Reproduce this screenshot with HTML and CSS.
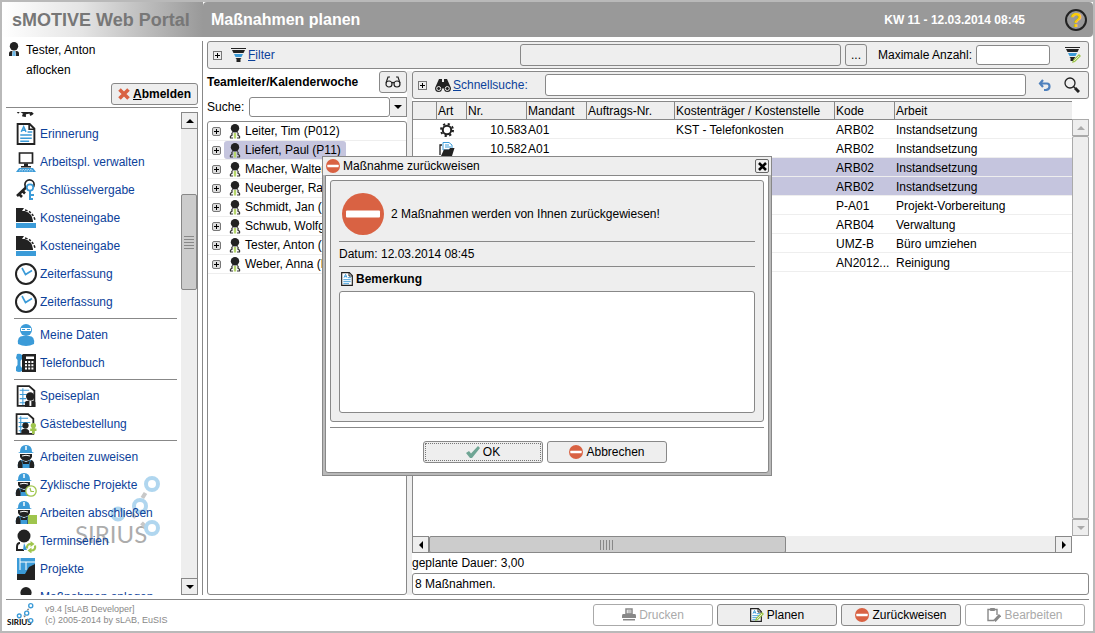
FILE: index.html
```html
<!DOCTYPE html>
<html lang="de">
<head>
<meta charset="utf-8">
<title>sMOTIVE Web Portal</title>
<link rel="stylesheet" href="styles.css">
</head>
<body>
<svg class="defs" aria-hidden="true">
  <symbol id="stop" viewBox="0 0 42 42"><circle cx="21" cy="21" r="21" fill="#d96243"/><rect x="4" y="17.500" width="34" height="7" rx="1" fill="#fff"/></symbol>
  <symbol id="user" viewBox="0 0 12 15"><circle cx="6" cy="4.200" r="4.200" fill="#222"/><path d="M1 14V11.500Q1 9 3.500 9L4.500 9 4 14ZM11 14V11.500Q11 9 8.500 9L7.500 9 8 14Z" fill="#222"/><path d="M5 9H7L7.800 14H4.200Z" fill="#6db9e8"/></symbol>
  <symbol id="leader" viewBox="0 0 12 15"><circle cx="6" cy="4.200" r="4.200" fill="#222"/><path d="M4.200 8.500Q2 9 3.200 11Q.8 12 1.500 14H4M7.800 8.500Q10 9 8.800 11Q11.200 12 10.500 14H8" fill="none" stroke="#333" stroke-width="1.200"/><path d="M4.800 9H7.200V14.500H4.800Z" fill="#b5d56a"/></symbol>
  <symbol id="doc" viewBox="0 0 18 21"><path d="M1 1H12.500L17 5.500V20H1Z" fill="#fff" stroke="#222" stroke-width="1.800"/><path d="M12 1V6H17" fill="none" stroke="#222" stroke-width="1.500"/><path d="M4.500 8.500L6.800 3.500 9 8.500M5.500 7H8.200" fill="none" stroke="#3b9bd8" stroke-width="1.400"/><path d="M10.500 8.500H15M3.500 11.500H14.500M3.500 14.500H14.500M3.500 17.500H12" stroke="#3b9bd8" stroke-width="1.400"/></symbol>
  <symbol id="pc" viewBox="0 0 20 20"><path d="M3.500 1H16.500V11H3.500Z" fill="#fff" stroke="#222" stroke-width="1.700"/><path d="M8 11.500H12V14H15V15.500H5V14H8Z" fill="#222"/><path d="M3 16H17L20 20H0Z" fill="#3b9bd8"/><path d="M4 17.500H16M3 18.800H17" stroke="#fff" stroke-width=".6" stroke-dasharray="1.500 1"/></symbol>
  <symbol id="keys" viewBox="0 0 20 22"><circle cx="13.500" cy="5.500" r="4.600" fill="none" stroke="#222" stroke-width="1.700"/><path d="M10 8.500L1 17M3 15L6 18M6.500 12L9 14.500" stroke="#222" stroke-width="2.600"/><circle cx="14" cy="8.500" r="3.200" fill="#fff" stroke="#3b9bd8" stroke-width="1.700"/><path d="M14 11.500V21M14 16H18M14 20H17" stroke="#3b9bd8" stroke-width="2"/></symbol>
  <symbol id="cost" viewBox="0 0 20 20"><path d="M0 0H8L6 3H9Q16 5 17 13V14H0Z" fill="#222"/><path d="M9 2Q17 4 19 12" fill="none" stroke="#222" stroke-width="1.500" stroke-dasharray="2.500 1.500"/><rect y="15" width="20" height="5" fill="#3b9bd8"/></symbol>
  <symbol id="clock" viewBox="0 0 22 22"><circle cx="11" cy="11" r="10" fill="#fff" stroke="#222" stroke-width="2"/><path d="M7 5L10.500 11.500 17 7.500" fill="none" stroke="#3b9bd8" stroke-width="1.600"/></symbol>
  <symbol id="me" viewBox="0 0 18 22"><circle cx="9" cy="6" r="6" fill="#3b9bd8"/><rect x="4" y="4" width="10" height="3" fill="#fff"/><path d="M5 5.500h3M10 5.500h3" stroke="#3b9bd8"/><path d="M1 20Q0 12 6 12H12Q18 12 17 20Q13 22 9 22T1 20Z" fill="#3b9bd8"/></symbol>
  <symbol id="phone" viewBox="0 0 20 18"><path d="M1 0Q4-1 6 1V5L4.500 7V12L6 14V17Q3 19 0 17V13L1.500 11V6L0 4Z" fill="#3b9bd8"/><path d="M7 0H20V18H6V1Z" fill="#222"/><path d="M10 2.500H18V5H10Z" fill="#fff"/><path d="M9 8H18M9 11.200H18M9 14.400H18" stroke="#fff" stroke-width="2" stroke-dasharray="2 1.200"/></symbol>
  <symbol id="meal" viewBox="0 0 18 21"><path d="M1 1H12L17 5.500V20H1Z" fill="#fff" stroke="#222" stroke-width="1.700"/><path d="M3 5H12M3 9H14M3 13H9M3 17H9M6 3V19" stroke="#3b9bd8"/><circle cx="13" cy="11" r="4" fill="#222"/><path d="M8 21V17Q8 15 11 15H15Q18 15 18 17V21Z" fill="#222"/><path d="M12.300 15h1.800v5h-1.800Z" fill="#fff"/></symbol>
  <symbol id="guest" viewBox="0 0 20 21"><path d="M1 1H12L17 5.500V20H1Z" fill="#fff" stroke="#222" stroke-width="1.700"/><path d="M3 5H12M3 9H14M3 13H9M3 17H9M5 3V19" stroke="#3b9bd8"/><circle cx="9.500" cy="12" r="3" fill="#222"/><path d="M5.500 19V17Q6 15 9 15T13 17V19Z" fill="#222"/><circle cx="17" cy="12" r="2.500" fill="#9fc54d"/><path d="M14 16H20M17 13V20" stroke="#9fc54d" stroke-width="2.500"/></symbol>
  <symbol id="worker" viewBox="0 0 18 24"><path d="M3 7Q3 0 9 0T15 7L17 8H1Z" fill="#3b9bd8"/><path d="M9 1V5" stroke="#fff" stroke-width="1.500"/><path d="M3 9H15V12Q13 16 9 16T3 12Z" fill="#222"/><path d="M5 11Q9 9.500 13 11" stroke="#fff" fill="none"/><path d="M1 23Q0 15 5 15L9 17 13 15Q18 15 17 23Z" fill="#3b9bd8"/><path d="M1 23Q0 15.500 4 15L5.500 19V23ZM17 23Q18 15.500 14 15L12.500 19V23Z" fill="#222"/><path d="M5 15.500L9 17 13 15.500 12 19H6Z" fill="#222"/></symbol>
  <symbol id="cyclic" viewBox="0 0 22 24"><use href="#worker" width="18" height="24"/><circle cx="16" cy="18" r="5.200" fill="#fff" stroke="#9fc54d" stroke-width="1.300"/><path d="M15 15L16 18.500H19" fill="none" stroke="#9fc54d" stroke-width="1.200"/></symbol>
  <symbol id="finish" viewBox="0 0 22 24"><use href="#worker" width="18" height="24"/><rect x="13" y="14" width="9" height="9" fill="#9fc54d"/></symbol>
  <symbol id="series" viewBox="0 0 22 24"><circle cx="9" cy="7" r="6.500" fill="#222"/><path d="M5 14Q2 14 2 18V21H9" fill="none" stroke="#222" stroke-width="2"/><path d="M9 14L12 21H8Z" fill="#3b9bd8"/><path d="M12 19.500Q11.500 15 16 15M20 16.500Q21 21.500 16 21.500" fill="none" stroke="#9fc54d" stroke-width="2.200"/><path d="M15.500 12L19.500 15 15.500 18ZM16.500 18.500L12.500 21.500 16.500 24.500Z" fill="#9fc54d"/></symbol>
  <symbol id="project" viewBox="0 0 18 22"><rect width="18" height="22" fill="#222"/><path d="M0 0H18V6L12 9 8 16H0Z" fill="#3b9bd8"/><path d="M3 0V12M3 4H18M9 4V12" stroke="#fff" fill="none"/></symbol>
  <symbol id="funnel" viewBox="0 0 15 14"><path d="M0 0H15V1H0ZM1 2H14L12.500 5H2.500Z" fill="#222"/><path d="M3 6H12L10.500 9H4.500Z" fill="#3b9bd8"/><path d="M4.500 10H10.500L9.500 11V14H5.500V11Z" fill="#222"/></symbol>
  <symbol id="gear" viewBox="0 0 14 14"><circle cx="7" cy="7" r="4.200" fill="none" stroke="#222" stroke-width="2"/><circle cx="7" cy="7" r="6" fill="none" stroke="#222" stroke-width="2" stroke-dasharray="2.200 2.512"/></symbol>
  <symbol id="folder" viewBox="0 0 16 14"><path d="M4 .5H10L13 3V8H4Z" fill="#fff" stroke="#3b9bd8"/><path d="M6 3H10M6 5H12" stroke="#3b9bd8"/><path d="M3 3H1V13" fill="none" stroke="#222" stroke-width="1.300"/><path d="M5 7.500H10L11 6H15.500L13 14H2Z" fill="#222"/></symbol>
  <symbol id="pencil" viewBox="0 0 9 9"><path d="M0 9L1 6 7 0 9 2 3 8Z" fill="#9fc54d"/><path d="M2 7L7 2" stroke="#fff" stroke-width=".7"/></symbol>
  <symbol id="stars" viewBox="0 0 52 62"><path d="M8 38H23L38 52M26 34L42 8" fill="none" stroke="#777" stroke-width="4" stroke-dasharray="6 8"/><g fill="#fff" stroke="#3b9bd8" stroke-width="4"><circle cx="9" cy="38" r="5.500"/><circle cx="31" cy="30" r="6"/><circle cx="43" cy="8" r="6"/><circle cx="43" cy="52" r="6"/></g></symbol>
</svg>

<div class="portal">
  <header class="top">
    <div class="brand">sMOTIVE Web Portal</div>
    <div class="titlebar">
      <h1>Maßnahmen planen</h1>
      <span class="clock">KW 11 - 12.03.2014 08:45</span>
      <button class="help" aria-label="Hilfe">?</button>
    </div>
  </header>

  <div class="middle">
    <aside class="side">
      <div class="account">
        <svg class="user-icon"><use href="#user"/></svg>
        <div class="names"><div>Tester, Anton</div><div>aflocken</div></div>
        <button class="btn logout"><svg viewBox="0 0 12 12" width="12" height="12"><path d="M1.500 1.500L10.500 10.500M10.500 1.500L1.500 10.500" stroke="#d96243" stroke-width="3.600"/></svg><b><u>A</u>bmelden</b></button>
      </div>
      <div class="nav-area">
        <div class="watermark"><span>SIRIUS</span><svg><use href="#stars"/></svg></div>
        <nav class="nav">
          <a href="#" aria-label="Einstellungen"><svg><use href="#gear"/></svg></a>
          <a href="#"><svg><use href="#doc"/></svg>Erinnerung</a>
          <a href="#"><svg class="small"><use href="#pc"/></svg>Arbeitspl. verwalten</a>
          <a href="#"><svg><use href="#keys"/></svg>Schlüsselvergabe</a>
          <a href="#"><svg class="small"><use href="#cost"/></svg>Kosteneingabe</a>
          <a href="#"><svg class="small"><use href="#cost"/></svg>Kosteneingabe</a>
          <a href="#"><svg><use href="#clock"/></svg>Zeiterfassung</a>
          <a href="#"><svg><use href="#clock"/></svg>Zeiterfassung</a>
          <hr>
          <a href="#"><svg><use href="#me"/></svg>Meine Daten</a>
          <a href="#"><svg class="small"><use href="#phone"/></svg>Telefonbuch</a>
          <hr>
          <a href="#"><svg><use href="#meal"/></svg>Speiseplan</a>
          <a href="#"><svg><use href="#guest"/></svg>Gästebestellung</a>
          <hr>
          <a href="#"><svg class="tall"><use href="#worker"/></svg>Arbeiten zuweisen</a>
          <a href="#"><svg class="tall"><use href="#cyclic"/></svg>Zyklische Projekte</a>
          <a href="#"><svg class="tall"><use href="#finish"/></svg>Arbeiten abschließen</a>
          <a href="#"><svg class="tall"><use href="#series"/></svg>Terminserien</a>
          <a href="#"><svg><use href="#project"/></svg>Projekte</a>
          <a href="#"><svg class="small"><use href="#user"/></svg>Maßnahmen anlegen</a>
        </nav>
        <div class="vbar">
          <button aria-label="Nach oben"><i class="up"></i></button>
          <div class="track"><div class="space"></div><div class="thumb"><i class="grip"></i></div></div>
          <button aria-label="Nach unten"><i class="down"></i></button>
        </div>
      </div>
    </aside>

    <main class="main">
      <section class="bar">
        <button class="plus" aria-label="Filter aufklappen"></button>
        <svg class="funnel"><use href="#funnel"/></svg>
        <a class="filter-link" href="#"><u>F</u>ilter</a>
        <input class="field filter-text" aria-label="Filter" readonly>
        <button class="btn more" aria-label="Filter wählen">...</button>
        <label class="max-label" for="max">Maximale Anzahl:</label>
        <input class="field max" id="max">
        <button class="icon-btn edit-filter" aria-label="Filter bearbeiten"><svg viewBox="0 0 16 16" width="16" height="16"><use href="#funnel" width="15" height="14"/><use href="#pencil" x="7" y="7" width="9" height="9"/></svg></button>
      </section>

      <div class="split">
        <section class="team">
          <div class="team-head">
            <h2>Teamleiter/Kalenderwoche</h2>
            <button class="btn glasses" aria-label="Anzeigen"><svg viewBox="0 0 16 12" width="16" height="12" fill="none" stroke="#222" stroke-width="1.200"><circle cx="4" cy="8" r="3"/><circle cx="12" cy="8" r="3"/><path d="M7 7Q8 6 9 7M1 7L3 1H5M15 7L13 1H11"/></svg></button>
          </div>
          <div class="search"><label for="suche">Suche:</label><input class="field" id="suche"><button class="drop" aria-label="Liste öffnen"><i class="down"></i></button></div>
          <ul class="tree">
            <li><button class="plus soft" aria-label="Aufklappen"></button><span><svg><use href="#leader"/></svg>Leiter, Tim (P012)</span></li>
            <li><button class="plus soft" aria-label="Aufklappen"></button><span class="chosen"><svg><use href="#leader"/></svg>Liefert, Paul (P11)</span></li>
            <li><button class="plus soft" aria-label="Aufklappen"></button><span><svg><use href="#leader"/></svg>Macher, Walter</span></li>
            <li><button class="plus soft" aria-label="Aufklappen"></button><span><svg><use href="#leader"/></svg>Neuberger, Ralf</span></li>
            <li><button class="plus soft" aria-label="Aufklappen"></button><span><svg><use href="#leader"/></svg>Schmidt, Jan (P14)</span></li>
            <li><button class="plus soft" aria-label="Aufklappen"></button><span><svg><use href="#leader"/></svg>Schwub, Wolfgang</span></li>
            <li><button class="plus soft" aria-label="Aufklappen"></button><span><svg><use href="#leader"/></svg>Tester, Anton (P16)</span></li>
            <li><button class="plus soft" aria-label="Aufklappen"></button><span><svg><use href="#leader"/></svg>Weber, Anna (P17)</span></li>
          </ul>
        </section>
        <div class="divider"></div>
        <section class="work">
          <div class="bar">
            <button class="plus" aria-label="Suche aufklappen"></button>
            <svg class="binoculars" viewBox="0 0 16 13"><path d="M4 0H7V3H9V0H12L16 9Q16 13 12.500 13T9 9.500H7Q7 13 3.500 13T0 9Z" fill="#222"/><circle cx="3.700" cy="9.500" r="2" fill="none" stroke="#eee"/><circle cx="12.300" cy="9.500" r="2" fill="none" stroke="#eee"/></svg>
            <label class="quick" for="quick"><u>S</u>chnellsuche:</label>
            <input class="field quick-field" id="quick">
            <button class="icon-btn undo" aria-label="Zurücksetzen"><svg viewBox="0 0 13 12" width="13" height="12" fill="none" stroke="#4f81bd" stroke-width="2.200"><path d="M5 1L2 4.500 5 8M2 4.500H9Q11.500 4.500 11.500 7.500T8 11H6"/></svg></button>
            <button class="icon-btn lens" aria-label="Suchen"><svg viewBox="0 0 16 16" width="16" height="16" fill="none" stroke="#222"><circle cx="6" cy="6" r="5" stroke-width="1.300"/><path d="M9.500 9.500L11 11" stroke-width="1.500"/><path d="M11 11L15 15" stroke-width="3"/></svg></button>
          </div>
          <div class="grid">
            <div class="sheet">
              <table>
                <colgroup><col class="c0"><col class="c1"><col class="c2"><col class="c2"><col class="c3"><col class="c4"><col class="c2"><col></colgroup>
                <thead><tr><th></th><th>Art</th><th>Nr.</th><th>Mandant</th><th>Auftrags-Nr.</th><th>Kostenträger / Kostenstelle</th><th>Kode</th><th>Arbeit</th></tr></thead>
                <tbody>
                  <tr><td></td><td class="art"><svg><use href="#gear"/></svg></td><td class="num">10.583</td><td>A01</td><td></td><td>KST - Telefonkosten</td><td>ARB02</td><td>Instandsetzung</td></tr>
                  <tr><td></td><td class="art"><svg><use href="#folder"/></svg></td><td class="num">10.582</td><td>A01</td><td></td><td></td><td>ARB02</td><td>Instandsetzung</td></tr>
                  <tr class="chosen"><td></td><td></td><td></td><td></td><td></td><td></td><td>ARB02</td><td>Instandsetzung</td></tr>
                  <tr class="chosen"><td></td><td></td><td></td><td></td><td></td><td></td><td>ARB02</td><td>Instandsetzung</td></tr>
                  <tr><td></td><td></td><td></td><td></td><td></td><td></td><td>P-A01</td><td>Projekt-Vorbereitung</td></tr>
                  <tr><td></td><td></td><td></td><td></td><td></td><td></td><td>ARB04</td><td>Verwaltung</td></tr>
                  <tr><td></td><td></td><td></td><td></td><td></td><td></td><td>UMZ-B</td><td>Büro umziehen</td></tr>
                  <tr><td></td><td></td><td></td><td></td><td></td><td></td><td>AN2012...</td><td>Reinigung</td></tr>
                </tbody>
              </table>
            </div>
            <div class="vbar idle">
              <button disabled aria-label="Nach oben"><i class="up"></i></button>
              <div class="track"></div>
              <button disabled aria-label="Nach unten"><i class="down"></i></button>
            </div>
            <div class="hbar">
              <button aria-label="Nach links"><i class="left"></i></button>
              <div class="track"><div class="thumb"><i class="grip"></i></div></div>
              <button aria-label="Nach rechts"><i class="right"></i></button>
            </div>
          </div>
          <div class="duration">geplante Dauer: 3,00</div>
          <input class="field status" aria-label="Status" value="8 Maßnahmen." readonly>
        </section>
      </div>
    </main>
  </div>

  <footer class="foot">
    <div class="mini"><span>SIRIUS</span><svg><use href="#stars"/></svg></div>
    <div class="version">v9.4 [sLAB Developer]<br>(c) 2005-2014 by sLAB, EuSIS</div>
    <div class="actions">
      <button class="btn" disabled><svg viewBox="0 0 14 13" width="14" height="13"><path d="M4 1H10V6H4Z" fill="#fff" stroke="#888" stroke-width="1.500"/><path d="M5.500 3H9M5.500 5H9" stroke="#888"/><path d="M1 6H13Q14 6 14 8V10H0V8Q0 6 1 6Z" fill="#888"/><path d="M1 11H13V12.500H1Z" fill="#888"/></svg>Drucken</button>
      <button class="btn"><svg viewBox="0 0 14 14" width="14" height="14"><use href="#doc" width="12" height="14"/><use href="#pencil" x="5" y="4" width="9" height="9"/></svg>Planen</button>
      <button class="btn"><svg width="14" height="14"><use href="#stop"/></svg>Zurückweisen</button>
      <button class="btn" disabled><svg viewBox="0 0 14 15" width="14" height="15" fill="none" stroke="#888"><path d="M7 13.500H1V2.500H10V8" stroke-width="1.400"/><path d="M3.500 3.500V1.500H7.500V3.500Z" fill="#888"/><path d="M7.500 14L13 8" stroke-width="3"/></svg>Bearbeiten</button>
    </div>
  </footer>
</div>

<div class="overlay">
  <section class="dialog" role="dialog" aria-labelledby="dlg">
    <div class="dialog-title"><svg width="14" height="14"><use href="#stop"/></svg><span id="dlg">Maßnahme zurückweisen</span><button class="close" aria-label="Schließen"><svg viewBox="0 0 9 9" width="9" height="9"><path d="M1 1L8 8M8 1L1 8" stroke="#000" stroke-width="2.600"/></svg></button></div>
    <div class="dialog-body">
      <div class="panel">
        <div class="message"><svg width="42" height="42"><use href="#stop"/></svg>2 Maßnahmen werden von Ihnen zurückgewiesen!</div>
        <div class="date">Datum: 12.03.2014 08:45</div>
        <label class="note" for="note"><svg width="12" height="14"><use href="#doc"/></svg>Bemerkung</label>
        <textarea id="note"></textarea>
      </div>
      <div class="dialog-actions">
        <button class="btn focus"><svg viewBox="0 0 14 12" width="14" height="12"><path d="M0 7L3 5 5 7.500 12 0 14 2 6 12 4 12Z" fill="#6fa594"/></svg>OK</button>
        <button class="btn"><svg width="14" height="14"><use href="#stop"/></svg>Abbrechen</button>
      </div>
    </div>
  </section>
</div>
</body>
</html>
```

FILE: styles.css
```css
* { box-sizing: border-box; }
body {
  margin: 0;
  font: 12px/16px "Liberation Sans", Arial, sans-serif;
  color: #000;
  background: #fff;
}
button, input, textarea { font: inherit; color: inherit; margin: 0; padding: 0; }
svg { display: block; flex: none; }
h1, h2 { margin: 0; }
a { color: #0c419a; text-decoration: none; }
.defs { position: absolute; width: 0; height: 0; }

.portal {
  height: 100vh;
  display: flex;
  flex-direction: column;
  border: 2px solid #b9b9b9;
}

/* header */
.top { display: flex; height: 35px; flex: none; }
.brand {
  width: 201px;
  padding-left: 10px;
  font: bold 18px/36px "Liberation Sans", Arial, sans-serif;
  color: #777;
  white-space: nowrap;
  background: linear-gradient(to right, #fff 0%, #e4e4e4 40%, #999 100%);
}
.titlebar {
  flex: 1;
  display: flex;
  align-items: center;
  padding: 0 6px 0 8px;
  background: #999;
  color: #fff;
  border-radius: 4px 4px 4px 0;
}
.titlebar h1 { flex: 1; font-size: 16px; line-height: 20px; }
.clock { font-weight: bold; margin-right: 40px; }
.help {
  width: 22px;
  height: 22px;
  border: 2px solid #222;
  border-radius: 50%;
  background: transparent;
  color: #ffcb05;
  font-weight: bold;
  font-size: 20px;
  line-height: 18px;
}

.middle { flex: 1; min-height: 0; display: flex; padding: 4px 4px 0 4px; }

/* sidebar */
.side {
  width: 197px;
  flex: none;
  display: flex;
  flex-direction: column;
  padding-right: 4px;
  border-right: 1px solid #888;
}
.account {
  display: grid;
  grid-template-columns: 20px 1fr;
  height: 67px;
  border-bottom: 1px solid #888;
}
.user-icon { width: 12px; height: 15px; margin: 1px 0 0 2px; }
.names { line-height: 20px; height: 40px; margin-top: -1px; }
.logout { grid-column: 1 / 3; justify-self: end; width: 87px; }
.nav-area { flex: 1; min-height: 0; display: flex; margin-top: 4px; position: relative; }
.nav { flex: 1; overflow: hidden; padding-left: 8px; padding-right: 4px; position: relative; }
.nav a {
  display: flex;
  align-items: center;
  height: 28px;
  white-space: nowrap;
}
.nav a:first-child { margin-top: -20px; }
.nav a svg { width: 22px; height: 22px; margin: 0 3px 0 1px; }
.nav a svg.small { width: 20px; height: 20px; margin: 0 4px 0 2px; }
.nav a svg.tall { height: 24px; }
.nav hr { margin: 2px 0; border: 0; border-top: 1px solid #888; }
.watermark { position: absolute; left: 69px; top: 364px; width: 90px; height: 72px; opacity: .4; }
.watermark span {
  position: absolute;
  left: 0;
  bottom: 0;
  font: 24px/28px "Liberation Sans Narrow", Lato, sans-serif;
  color: #333;
}
.watermark svg { position: absolute; right: 4px; top: 0; width: 52px; height: 62px; }

/* scrollbars */
.vbar { width: 17px; flex: none; display: flex; flex-direction: column; background: #eee; }
.vbar button, .hbar button, .drop {
  width: 17px;
  height: 17px;
  flex: none;
  border: 1px solid #888;
  background: #eee;
  display: grid;
  place-items: center;
}
.vbar .track { flex: 1; display: flex; flex-direction: column; border-right: 1px solid #888; }
.vbar .space { height: 65px; }
.vbar .thumb { height: 96px; }
.thumb { display: grid; place-items: center; background: #ccc; border: 1px solid #888; border-radius: 2px; }
.grip { width: 10px; height: 13px; background: repeating-linear-gradient(#888 0 1px, transparent 1px 3px); }
.up, .down { border: 4px solid transparent; width: 0; height: 0; }
.up { border-top: 0; border-bottom-color: #000; }
.down { border-bottom: 0; border-top-color: #000; }
.left, .right { border: 4px solid transparent; width: 0; height: 0; }
.left { border-left: 0; border-right-color: #000; }
.right { border-right: 0; border-left-color: #000; }

/* shared controls */
.btn {
  display: flex;
  align-items: center;
  justify-content: center;
  gap: 3px;
  height: 22px;
  border: 1px solid #888;
  border-radius: 3px;
  background: #eee;
  white-space: nowrap;
}
.btn:disabled { background: #fff; border-color: #aaa; color: #aaa; }
.icon-btn { border: 0; background: none; }
.field {
  height: 22px;
  min-width: 0;
  border: 1px solid #888;
  border-radius: 3px;
  background: #fff;
}
.bar {
  display: flex;
  align-items: center;
  height: 28px;
  flex: none;
  background: #eee;
  border: 1px solid #888;
  border-radius: 3px;
}
.plus {
  width: 9px;
  height: 9px;
  flex: none;
  border: 1px solid #777;
  background:
    linear-gradient(#000, #000) center / 5px 1px no-repeat,
    linear-gradient(#000, #000) center / 1px 5px no-repeat,
    #eee;
}
.plus.soft { border-radius: 2px; background-color: #ddd; }

/* main */
.main { flex: 1; min-width: 0; display: flex; flex-direction: column; padding-left: 4px; }
.main .plus { margin-left: 5px; }
.funnel { width: 15px; height: 14px; margin: 0 2px 0 9px; }
.filter-link { width: 272px; }
.filter-text { flex: 1; background: #eee; }
.more { width: 22px; margin-left: 4px; }
.max-label { margin-left: 11px; width: 98px; }
.max { width: 74px; height: 20px; }
.edit-filter { margin: 0 7px 0 15px; }
.split { flex: 1; min-height: 0; display: flex; padding-top: 2px; }
.team { width: 200px; flex: none; display: flex; flex-direction: column; }
.divider { width: 5px; flex: none; background: #eee; }
.team-head { display: flex; justify-content: space-between; align-items: center; }
.team-head h2 { font-size: 12px; line-height: 16px; }
.glasses { width: 28px; }
.search { display: flex; margin: 4px 0; height: 20px; align-items: center; }
.search label { width: 42px; }
.search .field { flex: 1; height: 20px; }
.drop { height: 20px; border-left: 0; }
.tree {
  flex: 1;
  margin: 0;
  padding: 0;
  list-style: none;
  border: 1px solid #888;
  border-radius: 3px;
}
.tree li { display: flex; align-items: center; height: 19px; border-bottom: 1px solid #eee; }
.tree .plus { margin-left: 4px; }
.tree span { display: flex; align-items: center; gap: 4px; height: 18px; margin-left: 3px; padding: 0 5px; border-radius: 3px; white-space: nowrap; }
.tree svg { width: 12px; height: 15px; }
.chosen { background: #c5c5de; }

.work { flex: 1; min-width: 0; display: flex; flex-direction: column; }
.binoculars { width: 16px; height: 13px; margin: 0 2px 0 8px; }
.quick { color: #0c419a; width: 92px; }
.quick-field { flex: 1; }
.undo { margin-left: 12px; }
.lens { margin: 0 8px 0 13px; }
.grid {
  flex: 1;
  min-height: 0;
  margin-top: 2px;
  display: grid;
  grid-template: 1fr 17px / 1fr 17px;
}
.sheet { border-left: 1px solid #888; overflow: hidden; }
table { width: 100%; table-layout: fixed; border-collapse: separate; border-spacing: 0; }
.c0 { width: 24px; }
.c1 { width: 30px; }
.c2 { width: 60px; }
.c3 { width: 88px; }
.c4 { width: 160px; }
th, td { height: 19px; padding: 0 0 0 1px; text-align: left; white-space: nowrap; font-weight: normal; line-height: 16px; }
th { background: #eee; border: solid #888; border-width: 1px 1px 1px 0; }
th:last-child { border-right: 0; }
td { padding-top: 2px; border-bottom: 1px solid #eee; }
td.num { text-align: right; }
td.art svg { width: 16px; height: 14px; margin-left: 1px; }
.idle { margin-top: 18px; }
.idle button, .idle .track { border: 1px solid #aaa; }
.idle .track { border-radius: 2px; }
.idle .up { border-bottom-color: #aaa; }
.idle .down { border-top-color: #aaa; }
.hbar { display: flex; background: #eee; }
.hbar .track { flex: 1; display: flex; border-bottom: 1px solid #888; }
.hbar .thumb { width: 57%; height: 17px; }
.hbar .grip { width: 14px; height: 10px; background: repeating-linear-gradient(to right, #888 0 1px, transparent 1px 3px); }
.duration { padding: 2px 0; line-height: 16px; }
.status { width: 100%; padding: 0 2px; }

/* footer */
.foot {
  display: flex;
  align-items: center;
  height: 32px;
  flex: none;
  margin: 4px 4px 0;
  padding: 0 4px 2px 0;
  border-top: 1px solid #888;
}
.mini { position: relative; width: 28px; height: 24px; }
.mini span { position: absolute; left: 1px; bottom: 0; font: bold 8px/10px "Liberation Sans Narrow", Lato, sans-serif; }
.mini svg { position: absolute; right: 0; top: 0; width: 18px; height: 21px; }
.version { flex: 1; margin-left: 11px; font-size: 9px; line-height: 11px; color: #888; }
.actions { display: flex; gap: 4px; }
.actions .btn, .dialog-actions .btn { width: 120px; }

/* dialog */
.overlay { position: fixed; inset: 0; display: grid; place-items: center; padding: 0 1px 1px 0; }
.dialog { width: 450px; max-width: 100%; border: 1px solid #888; background: #b9b9b9; }
.dialog-title { display: flex; align-items: center; gap: 3px; height: 18px; padding: 0 2px 0 3px; background: #eee; }
.dialog-title span { flex: 1; }
.close { width: 14px; height: 14px; border: 1px solid #666; border-radius: 2px; background: #eee; display: grid; place-items: center; }
.dialog-body { margin: 0 2px 2px; padding: 4px; background: #fff; border: 1px solid #888; border-radius: 0 0 3px 3px; }
.panel { padding: 12px 8px 8px; border: 1px solid #888; border-radius: 3px; background: #eee; }
.message { display: flex; align-items: center; gap: 7px; padding: 0 3px 6px; border-bottom: 1px solid #888; }
.date { padding: 4px 0; border-bottom: 1px solid #888; }
.note { display: flex; align-items: center; gap: 3px; height: 24px; padding: 0 2px; font-weight: bold; }
.panel textarea { display: block; width: 100%; height: 122px; resize: none; border: 1px solid #888; border-radius: 3px; background: #fff; }
.dialog-actions { display: flex; justify-content: center; gap: 4px; margin-top: 5px; padding: 13px 4px 5px 0; border-top: 1px solid #888; }
.focus { outline: 1px dotted #777; outline-offset: -3px; }
```
